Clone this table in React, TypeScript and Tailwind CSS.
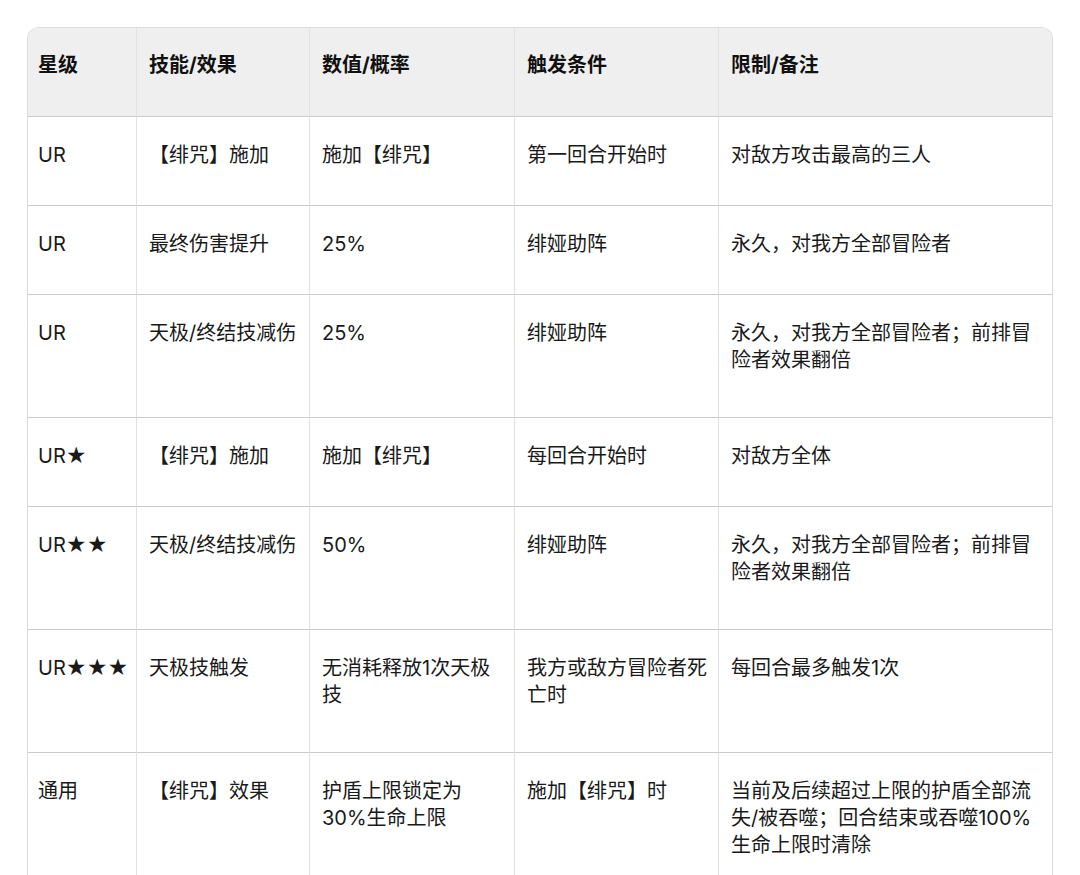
import React from 'react'

interface Row {
  star: string
  skill: string
  value: React.ReactNode
  trigger: string
  note: string
  h: string
}

const rows: Row[] = [
  { star: 'UR', skill: '【绯咒】施加', value: '施加【绯咒】', trigger: '第一回合开始时', note: '对敌方攻击最高的三人', h: 'h-[89px]' },
  { star: 'UR', skill: '最终伤害提升', value: '25%', trigger: '绯娅助阵', note: '永久，对我方全部冒险者', h: 'h-[89px]' },
  { star: 'UR', skill: '天极/终结技减伤', value: '25%', trigger: '绯娅助阵', note: '永久，对我方全部冒险者；前排冒险者效果翻倍', h: 'h-[123px]' },
  { star: 'UR★', skill: '【绯咒】施加', value: '施加【绯咒】', trigger: '每回合开始时', note: '对敌方全体', h: 'h-[89px]' },
  { star: 'UR★★', skill: '天极/终结技减伤', value: '50%', trigger: '绯娅助阵', note: '永久，对我方全部冒险者；前排冒险者效果翻倍', h: 'h-[123px]' },
  { star: 'UR★★★', skill: '天极技触发', value: '无消耗释放1次天极技', trigger: '我方或敌方冒险者死亡时', note: '每回合最多触发1次', h: 'h-[123px]' },
  {
    star: '通用',
    skill: '【绯咒】效果',
    value: (
      <>
        护盾上限锁定为
        <br />
        30%生命上限
      </>
    ),
    trigger: '施加【绯咒】时',
    note: '当前及后续超过上限的护盾全部流失/被吞噬；回合结束或吞噬100%生命上限时清除',
    h: 'h-[150px]',
  },
]

const headers = ['星级', '技能/效果', '数值/概率', '触发条件', '限制/备注']

export default function App() {
  const cell = 'align-top pr-2 border-b border-b-[#cbcbcb] border-r border-r-[#e2e2e2] last:border-r-0'
  return (
    <div className="min-h-[875px] bg-white pt-[27px] px-[27px] font-['Inter','Noto_Sans_CJK_SC',sans-serif] text-[20px] leading-[27px] text-[#1a1a1a]">
      <div className="rounded-t-[12px] border border-[#dcdcdc] border-b-0 overflow-hidden">
        <table className="w-full table-fixed border-separate border-spacing-0">
          <colgroup>
            <col className="w-[109px]" />
            <col className="w-[173px]" />
            <col className="w-[205px]" />
            <col className="w-[204px]" />
            <col />
          </colgroup>
          <thead>
            <tr className="h-[89px] bg-[#efefef]">
              {headers.map((h, i) => (
                <th key={h} className={`${cell} ${i === 0 ? 'pl-[10px]' : 'pl-3'} pt-[24px] text-left font-bold text-[#111]`}>
                  {h}
                </th>
              ))}
            </tr>
          </thead>
          <tbody>
            {rows.map((r, i) => (
              <tr key={i} className={r.h}>
                <td className={`${cell} pl-[10px] pt-[25px]`}>{r.star}</td>
                <td className={`${cell} pl-3 pt-[25px]`}>{r.skill}</td>
                <td className={`${cell} pl-3 pt-[25px]`}>{r.value}</td>
                <td className={`${cell} pl-3 pt-[25px]`}>{r.trigger}</td>
                <td className={`${cell} pl-3 pt-[25px]`}>{r.note}</td>
              </tr>
            ))}
          </tbody>
        </table>
      </div>
    </div>
  )
}
